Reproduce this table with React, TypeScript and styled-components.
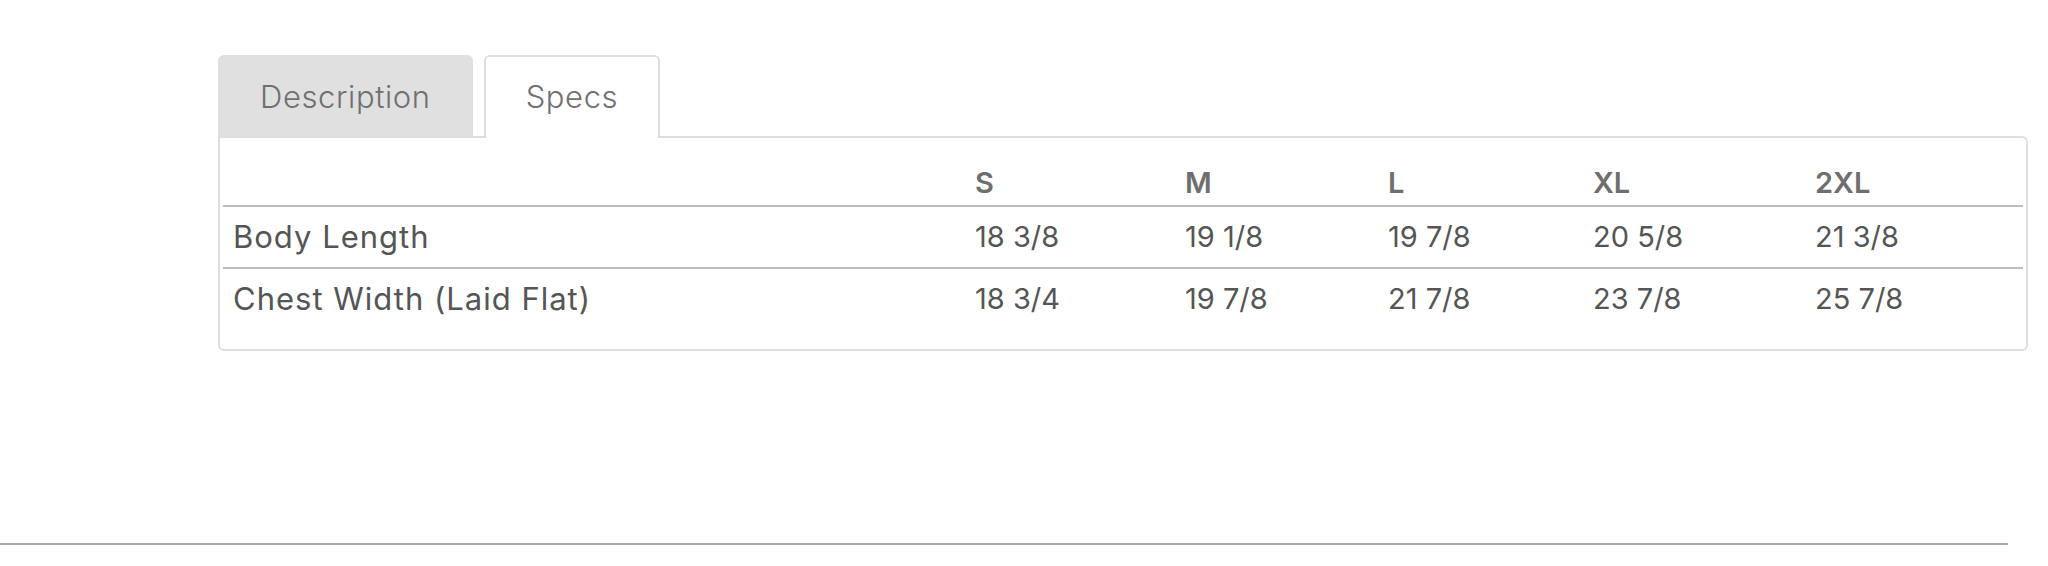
import React from "react"
import styled, {createGlobalStyle} from "styled-components"

const GlobalStyle = createGlobalStyle`
    html, body{
        margin: 0;
        padding: 0;
        background: #ffffff;
        font-family: Inter, "Open Sans", "Liberation Sans", sans-serif;
    }
`

const Page = styled.div`
    width: 100%;
    height: 566px;
    overflow: hidden;
`

const ProductInfo = styled.section`
    padding: 55px 20px 0 218px;
`

const TabList = styled.div`
    display: flex;
    align-items: flex-end;
    gap: 11px;
`

const Tab = styled.button<{$active?: boolean}>`
    position: relative;
    height: 81px;
    padding: 0 40px;
    font-family: inherit;
    font-size: 31px;
    font-weight: 300;
    letter-spacing: 0.6px;
    color: #707070;
    border-radius: 6px 6px 0 0;
    cursor: pointer;
    ${({$active}) => $active ? `
        background: #ffffff;
        border: 2px solid #dedede;
        border-bottom: none;
        height: 83px;
        padding-bottom: 2px;
        margin-bottom: -2px;
        z-index: 2;
    ` : `
        background: #e0e0e0;
        border: 2px solid #e0e0e0;
        border-bottom: none;
    `}
`

const Panel = styled.div`
    border: 2px solid #dedede;
    border-radius: 0 6px 6px 6px;
    padding: 3px 3px 20px 3px;
`

const SpecTable = styled.table`
    width: 100%;
    border-collapse: collapse;
    table-layout: fixed;
    color: #555555;
    line-height: 35px;
`

const HeadCell = styled.th`
    padding: 24px 12px 5px 12px;
    text-align: left;
    font-size: 29px;
    font-weight: 600;
    color: #6e6e6e;
    border-bottom: 2px solid #bdbdbd;
`

const Row = styled.tr<{$last?: boolean}>`
    ${({$last}) => !$last && `
        & td{
            border-bottom: 2px solid #bdbdbd;
        }
    `}
`

const Cell = styled.td<{$label?: boolean}>`
    padding: 12px 12px 13px 12px;
    vertical-align: middle;
    font-size: 29px;
    font-weight: 400;
    white-space: nowrap;
    ${({$label}) => $label && `
        padding-left: 10px;
        font-size: 31px;
        letter-spacing: 1px;
    `}
`

const BottomRule = styled.hr`
    margin: 192px 40px 0 0;
    border: none;
    border-top: 2px solid #a8a8a8;
`

const sizes = ["S", "M", "L", "XL", "2XL"]
const colWidths = [740, 210, 203, 205, 222, 220]

const specs = [
    {label: "Body Length", values: ["18 3/8", "19 1/8", "19 7/8", "20 5/8", "21 3/8"]},
    {label: "Chest Width (Laid Flat)", values: ["18 3/4", "19 7/8", "21 7/8", "23 7/8", "25 7/8"]},
]

export default function App(){
    return(
        <Page>
            <GlobalStyle/>
            <ProductInfo>
                <TabList>
                    <Tab>Description</Tab>
                    <Tab $active>Specs</Tab>
                </TabList>
                <Panel>
                    <SpecTable>
                        <colgroup>
                            {colWidths.map((w, i) => <col key={i} style={{width: w}}/>)}
                        </colgroup>
                        <thead>
                            <tr>
                                <HeadCell></HeadCell>
                                {sizes.map(s => <HeadCell key={s}>{s}</HeadCell>)}
                            </tr>
                        </thead>
                        <tbody>
                            {specs.map((spec, i) => (
                                <Row key={spec.label} $last={i === specs.length - 1}>
                                    <Cell $label>{spec.label}</Cell>
                                    {spec.values.map((v, j) => <Cell key={j}>{v}</Cell>)}
                                </Row>
                            ))}
                        </tbody>
                    </SpecTable>
                </Panel>
            </ProductInfo>
            <BottomRule/>
        </Page>
    )
}
